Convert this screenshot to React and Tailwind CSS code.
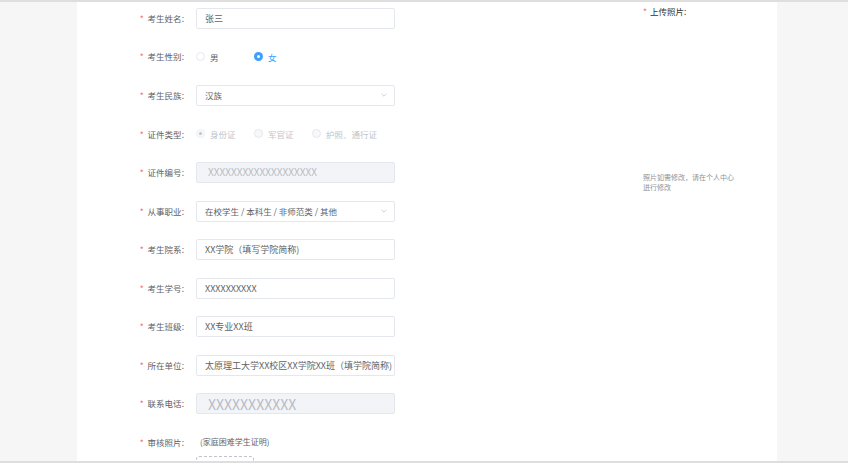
import React from "react";

const font = { fontFamily: '"Noto Sans CJK SC", "Noto Sans", sans-serif' };

function Label({ children }) {
  return (
    <div className="w-[88px] shrink-0 text-right text-[8.5px] text-[#606266] pr-[1px]">
      <span className="text-[#f56c6c] mr-[4px]">*</span>
      {children}:
    </div>
  );
}

function Input({ value, disabled, big }) {
  return (
    <div
      className={
        "ml-[11px] w-[199px] h-[21px] border rounded-[2px] flex items-center " +
        (disabled
          ? "bg-[#f3f4f7] border-[#e4e7ed] text-[#b8bcc4] pl-[11px] "
          : "bg-white border-[#e4e7ed] text-[#606266] pl-[8px] ")
      }
    >
      <span className={big ? "text-[14px] leading-none" : disabled ? "text-[10px] leading-none" : "text-[9px] leading-none"}>{value}</span>
    </div>
  );
}

function Select({ value }) {
  return (
    <div className="ml-[11px] w-[199px] h-[21px] border border-[#e4e7ed] rounded-[2px] bg-white flex items-center pl-[8px] pr-[6px] justify-between text-[#606266]">
      <span className="text-[8.5px] leading-none">{value}</span>
      <svg width="8" height="8" viewBox="0 0 10 10" fill="none" stroke="#c0c4cc" strokeWidth="1">
        <path d="M2 3.5 L5 6.5 L8 3.5" />
      </svg>
    </div>
  );
}

function Radio({ checked, disabled, label, w }) {
  let circle;
  if (checked && !disabled) {
    circle = (
      <span className="w-[9px] h-[9px] rounded-full bg-[#409eff] flex items-center justify-center">
        <span className="w-[3px] h-[3px] rounded-full bg-white" />
      </span>
    );
  } else if (checked && disabled) {
    circle = (
      <span className="w-[9px] h-[9px] rounded-full bg-[#f7f8fa] border border-[#eef0f3] flex items-center justify-center">
        <span className="w-[3px] h-[3px] rounded-full bg-[#c0c4cc]" />
      </span>
    );
  } else {
    circle = (
      <span className={"w-[9px] h-[9px] rounded-full border border-[#e4e7ed] " + (disabled ? "bg-[#f7f8fa]" : "bg-white")} />
    );
  }
  return (
    <div className={"flex items-center " + w}>
      {circle}
      <span
        className={
          "ml-[5px] text-[8.5px] leading-none " +
          (disabled ? "text-[#c0c4cc]" : checked ? "text-[#409eff]" : "text-[#606266]")
        }
      >
        {label}
      </span>
    </div>
  );
}

function Row({ children }) {
  return <div className="h-[38.55px] shrink-0 flex items-center">{children}</div>;
}

export default function App() {
  return (
    <div className="w-[848px] h-[463px] bg-[#f6f6f6] flex flex-col overflow-hidden" style={font}>
      <div className="h-[2px] bg-[#dedede] shrink-0" />
      <div className="flex-1 overflow-hidden">
        <div className="ml-[77px] w-[700px] h-[480px] bg-white flex -mt-[3px]">
          <div className="w-[20px] shrink-0" />
          <div className="w-[320px] shrink-0 flex flex-col">
            <Row>
              <Label>考生姓名</Label>
              <Input value="张三" />
            </Row>
            <Row>
              <Label>考生性别</Label>
              <div className="ml-[11px] flex">
                <Radio label="男" w="w-[58px]" />
                <Radio label="女" checked w="w-[58px]" />
              </div>
            </Row>
            <Row>
              <Label>考生民族</Label>
              <Select value="汉族" />
            </Row>
            <Row>
              <Label>证件类型</Label>
              <div className="ml-[11px] flex">
                <Radio label="身份证" checked disabled w="w-[58px]" />
                <Radio label="军官证" disabled w="w-[58px]" />
                <Radio label="护照、通行证" disabled w="w-[80px]" />
              </div>
            </Row>
            <Row>
              <Label>证件编号</Label>
              <Input value="XXXXXXXXXXXXXXXXXXX" disabled />
            </Row>
            <Row>
              <Label>从事职业</Label>
              <Select value="在校学生 / 本科生 / 非师范类 / 其他" />
            </Row>
            <Row>
              <Label>考生院系</Label>
              <Input value="XX学院（填写学院简称)" />
            </Row>
            <Row>
              <Label>考生学号</Label>
              <Input value="XXXXXXXXXX" />
            </Row>
            <Row>
              <Label>考生班级</Label>
              <Input value="XX专业XX班" />
            </Row>
            <Row>
              <Label>所在单位</Label>
              <Input value="太原理工大学XX校区XX学院XX班（填学院简称)" />
            </Row>
            <Row>
              <Label>联系电话</Label>
              <Input value="XXXXXXXXXXX" disabled big />
            </Row>
            <Row>
              <Label>审核照片</Label>
              <span className="ml-[15px] text-[8px] text-[#606266]">(家庭困难学生证明)</span>
            </Row>
            <div className="ml-[99px] mt-[-6px] shrink-0 w-[58px] h-[40px] border border-dashed border-[#c0c4cc] rounded-[3px]" />
          </div>
          <div className="ml-[226px] pt-[6px] flex flex-col">
            <div className="text-[8.5px] text-[#303133]">
              <span className="text-[#f56c6c] mr-[3px]">*</span>上传照片:
            </div>
            <div className="mt-[154px] text-[7px] leading-[10px] text-[#909399] w-[93px]">
              照片如需修改，请在个人中心进行修改
            </div>
          </div>
        </div>
      </div>
      <div className="h-[2px] bg-[#dedede] shrink-0" />
    </div>
  );
}
